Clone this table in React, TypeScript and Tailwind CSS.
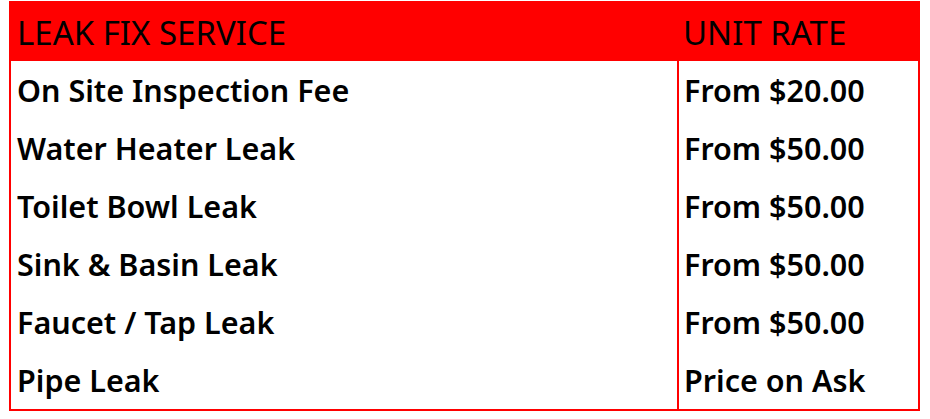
import React from "react";

const rows: [string, string][] = [
  ["On Site Inspection Fee", "From $20.00"],
  ["Water Heater Leak", "From $50.00"],
  ["Toilet Bowl Leak", "From $50.00"],
  ["Sink & Basin Leak", "From $50.00"],
  ["Faucet / Tap Leak", "From $50.00"],
  ["Pipe Leak", "Price on Ask"],
];

export default function App() {
  return (
    <div className="w-[930px] h-[419px] bg-white pt-[1px] pl-[9px]" style={{ fontFamily: '"Noto Sans", sans-serif' }}>
      <div className="w-[911px] border-2 border-[#ff0000] text-black">
        <div className="grid grid-cols-[666px_1fr] h-[58px] bg-[#ff0000] items-center text-[33px] leading-none font-normal">
          <div className="pl-[6px]">LEAK FIX SERVICE</div>
          <div className="pl-[6px]">UNIT RATE</div>
        </div>
        {rows.map(([a, b]) => (
          <div key={a} className="grid grid-cols-[666px_1fr] h-[58px] text-[30.5px] leading-none font-semibold">
            <div className="pl-[6px] flex items-center">{a}</div>
            <div className="pl-[5px] flex items-center border-l-2 border-[#ff0000]">{b}</div>
          </div>
        ))}
      </div>
    </div>
  );
}
